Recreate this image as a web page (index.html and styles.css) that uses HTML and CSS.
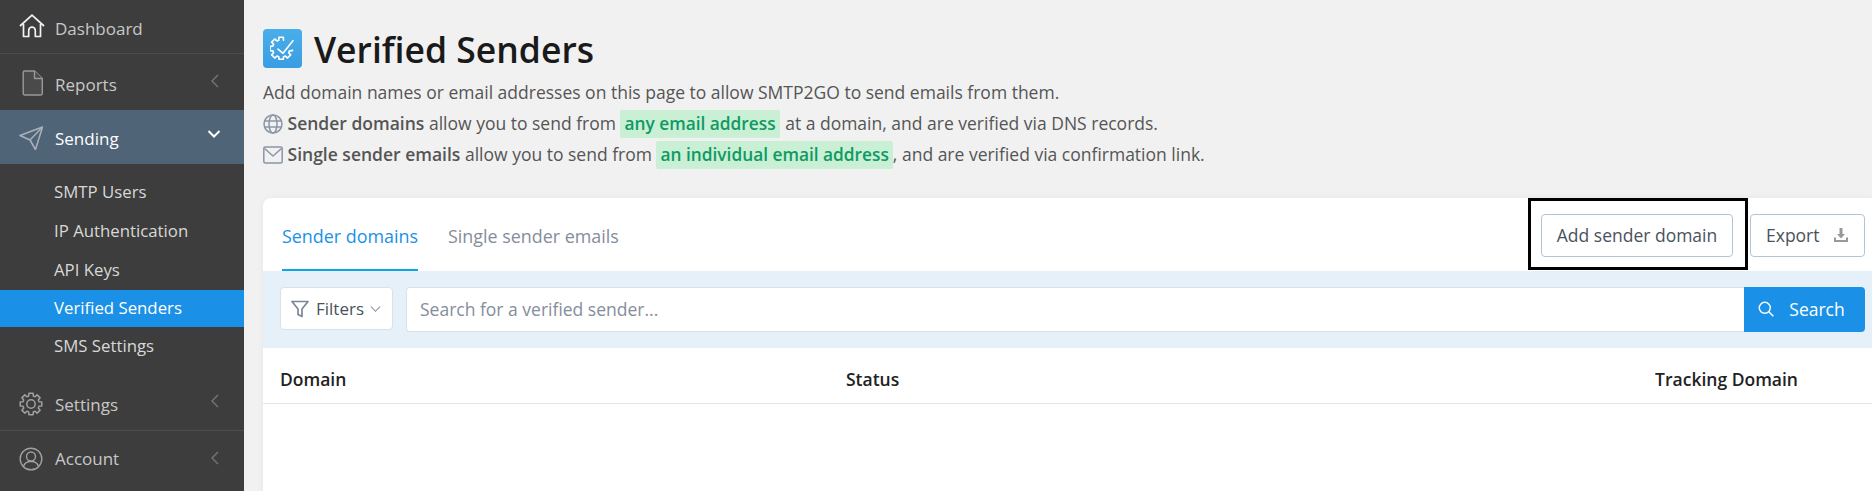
FILE: index.html
```html
<!DOCTYPE html>
<html lang="en">
<head>
    <meta charset="UTF-8">
    <title>Verified Senders</title>
    <link rel="stylesheet" href="styles.css">
</head>
<body>
    <div class="layout">
        <nav class="sidebar">
            <a class="nav-item nav-dashboard">
                <svg class="nav-icon" viewBox="0 0 26 24" fill="none" stroke="#f2f2f2" stroke-width="1.7" stroke-linejoin="round"><path d="M1 12 13 1.2 25 12"/><path d="M4.5 10v12.500h5.200v-6a3.300 3.300 0 0 1 6.600 0v6h5.200V10"/></svg>
                <span>Dashboard</span>
            </a>
            <a class="nav-item nav-reports">
                <svg class="nav-icon" viewBox="0 0 24 26" fill="#4a4a4a" stroke="#999" stroke-width="1.4" stroke-linejoin="round"><path d="M5.700 1h9.800l7.800 7.500v15a1.500 1.500 0 0 1-1.500 1.500H5.700a1.500 1.500 0 0 1-1.500-1.500v-21A1.500 1.500 0 0 1 5.700 1Z"/><path d="M15.500 1v7.500h7.800"/></svg>
                <span>Reports</span>
                <svg class="caret" viewBox="0 0 8 14" fill="none" stroke="#777" stroke-width="1.3"><path d="M7 1 1 7l6 6"/></svg>
            </a>
            <a class="nav-item nav-sending">
                <svg class="nav-icon" viewBox="0 0 24 24" fill="none" stroke="#a9b2bc" stroke-width="1.5" stroke-linejoin="round"><path d="M23.500 1 1 9.500 11 14l5.500 9.500Z"/><path d="M23.500 1 11 14"/></svg>
                <span>Sending</span>
                <svg class="caret-open" viewBox="0 0 14 8" fill="none" stroke="#fff" stroke-width="2"><path d="m1.500 1 5.500 5.500L12.500 1"/></svg>
            </a>
            <div class="submenu">
                <a class="sub-item">SMTP Users</a>
                <a class="sub-item">IP Authentication</a>
                <a class="sub-item">API Keys</a>
                <a class="sub-item active">Verified Senders</a>
                <a class="sub-item">SMS Settings</a>
            </div>
            <a class="nav-item nav-settings">
                <svg class="nav-icon" viewBox="0 0 24 24" fill="none" stroke="#a0a0a0" stroke-width="1.500" stroke-linejoin="round"><circle cx="12" cy="12" r="4.200"/><path d="M22.800 9.900v4.200l-2.820.19-.72 1.730 1.860 2.130-2.970 2.970-2.130-1.860-1.730.72-.19 2.820H9.900l-.19-2.820-1.730-.72-2.130 1.860-2.970-2.970 1.860-2.130-.72-1.730-2.820-.19V9.900l2.820-.19.72-1.730-1.860-2.130 2.970-2.970 2.130 1.860 1.730-.72.19-2.820h4.200l.19 2.820 1.730.72 2.130-1.860 2.970 2.970-1.860 2.130.72 1.730Z"/></svg>
                <span>Settings</span>
                <svg class="caret" viewBox="0 0 8 14" fill="none" stroke="#777" stroke-width="1.3"><path d="M7 1 1 7l6 6"/></svg>
            </a>
            <a class="nav-item nav-account">
                <svg class="nav-icon" viewBox="0 0 24 24" fill="none" stroke="#a0a0a0" stroke-width="1.400"><circle cx="12" cy="12" r="10.800"/><circle cx="12" cy="9.500" r="4.500"/><path d="M4.500 19.500c1-3.500 3.500-5 7.500-5s6.500 1.500 7.500 5"/></svg>
                <span>Account</span>
                <svg class="caret" viewBox="0 0 8 14" fill="none" stroke="#777" stroke-width="1.3"><path d="M7 1 1 7l6 6"/></svg>
            </a>
        </nav>

        <main class="content">
            <header class="page-head">
                <h1 class="page-title">
                    <span class="title-badge">
                        <svg viewBox="0 0 24 24" fill="none" stroke="#fff" stroke-width="1.600" stroke-linejoin="round" stroke-linecap="round"><path d="M21.500 13.600v.5l-2.820.19-.72 1.730 1.860 2.130-2.970 2.970-2.130-1.860-1.730.72-.19 2.320H8.600l-.19-2.320-1.730-.72-2.130 1.860-2.970-2.970 1.860-2.130-.72-1.730L0 14.100V9.900l2.720-.19.72-1.730-1.860-2.130 2.970-2.970 2.130 1.860 1.730-.72.19-2.820h4.200l.19 2.820"/><path d="m7.700 12.500 4.800 4.100L22 4.500"/></svg>
                    </span>
                    Verified Senders
                </h1>
                <p class="intro">Add domain names or email addresses on this page to allow SMTP2GO to send emails from them.</p>
                <p class="intro">
                    <svg class="intro-icon" viewBox="0 0 20 20" fill="none" stroke="#8b95a8" stroke-width="1.500"><circle cx="10" cy="10" r="9"/><ellipse cx="10" cy="10" rx="4" ry="9"/><path d="M1.500 7h17M1.500 13h17"/></svg>
                    <b>Sender domains</b> allow you to send from <mark class="hl">any email address</mark> at a domain, and are verified via DNS records.
                </p>
                <p class="intro">
                    <svg class="intro-icon" viewBox="0 0 20 18" fill="none" stroke="#8b95a8" stroke-width="1.500" stroke-linejoin="round"><rect x=".8" y="1" width="18.400" height="16" rx="1.500"/><path d="m1.500 2.500 8.500 7.500 8.500-7.500"/></svg>
                    <b>Single sender emails</b> allow you to send from <mark class="hl hl-tight">an individual email address</mark>, and are verified via confirmation link.
                </p>
            </header>

            <section class="card">
                <div class="card-top">
                    <div class="tabs">
                        <a class="tab active">Sender domains</a>
                        <a class="tab">Single sender emails</a>
                    </div>
                    <div class="actions">
                        <button class="btn btn-add">Add sender domain</button>
                        <button class="btn btn-export">Export
                            <svg viewBox="0 0 16 16" fill="#999"><path d="M6.500 1h3v6H12L8 11.500 4 7h2.500Z"/><path d="M1 10.500h2V13h10v-2.500h2V15H1Z"/></svg>
                        </button>
                        <div class="callout"></div>
                    </div>
                </div>

                <div class="search-band">
                    <button class="filter-btn">
                        <svg viewBox="0 0 18 18" fill="none" stroke="#7c8797" stroke-width="1.700" stroke-linejoin="round"><path d="M1 1.500h16l-6 7.500v7.500l-4-2V9Z"/></svg>
                        Filters
                        <svg class="filter-caret" viewBox="0 0 12 8" fill="none" stroke="#8a94a3" stroke-width="1.200"><path d="m1 1.500 5 5 5-5"/></svg>
                    </button>
                    <div class="search-box">
                        <input class="search-input" type="text" placeholder="Search for a verified sender...">
                        <button class="search-btn">
                            <svg viewBox="0 0 16 16" fill="none" stroke="#fff" stroke-width="1.400"><circle cx="6.800" cy="6.800" r="5.500"/><path d="m10.800 10.800 4.500 4.500"/></svg>
                            Search
                        </button>
                    </div>
                </div>

                <div class="table-head">
                    <div class="col-domain">Domain</div>
                    <div class="col-status">Status</div>
                    <div class="col-tracking">Tracking Domain</div>
                </div>
            </section>
        </main>
    </div>
</body>
</html>
```

FILE: styles.css
```css
* {
    box-sizing: border-box;
}

html, body {
    height: 100%;
}

body {
    margin: 0;
    overflow: hidden;
    background-color: #f1f1f1;
    font-family: "Open Sans", sans-serif;
    font-size: 17.5px;
    color: #555;
}

.layout {
    display: flex;
    height: 491px;
    overflow: hidden;
}

/* sidebar */
.sidebar {
    flex: 0 0 244px;
    background-color: #3d3d3d;
    display: flex;
    flex-direction: column;
    font-size: 17px;
}

.nav-item {
    display: flex;
    align-items: center;
    padding-left: 19px;
    color: #c8c8c8;
    position: relative;
}

.nav-item span {
    margin-left: 12px;
}

.nav-icon {
    width: 24px;
    height: 24px;
    flex: none;
}

.nav-dashboard {
    height: 54px;
    border-bottom: 1px solid #4c4c4c;
    padding-top: 4px;
}

.nav-dashboard .nav-icon {
    width: 26px;
    margin-top: -5px;
}

.nav-dashboard span {
    margin-left: 10px;
}

.nav-reports {
    height: 56px;
    padding-top: 4px;
}

.nav-reports .nav-icon {
    height: 26px;
    margin-top: -3px;
}

.nav-sending {
    height: 54px;
    padding-top: 2px;
    background-color: #506478;
    color: #fff;
}

.nav-settings {
    height: 57px;
    padding-top: 4px;
    border-bottom: 1px solid #4c4c4c;
}

.nav-account {
    height: 57px;
    margin-top: -1px;
}

.caret {
    position: absolute;
    right: 25px;
    top: 50%;
    margin-top: -8px;
    width: 8px;
    height: 14px;
}

.caret-open {
    position: absolute;
    right: 23px;
    top: 20px;
    width: 14px;
    height: 8px;
}

.submenu {
    padding-top: 9px;
    height: 210px;
    font-size: 16.800px;
}

.sub-item {
    display: flex;
    align-items: center;
    height: 39px;
    padding-bottom: 2px;
    padding-left: 54px;
    color: #d8d8d8;
}

.sub-item.active {
    height: 37px;
    background-color: #1a91e6;
    color: #fff;
}

/* main column */
.content {
    flex: 1;
    min-width: 0;
    padding: 29px 0 0 19px;
}

.page-title {
    display: flex;
    align-items: center;
    gap: 12px;
    margin: 0 0 9px;
    height: 39px;
    font-size: 35.500px;
    font-weight: 600;
    color: #1a1a1a;
}

.title-badge {
    flex: none;
    width: 39px;
    height: 39px;
    border-radius: 4px;
    background: linear-gradient(#4aaeea, #3a9de2);
    display: flex;
    align-items: center;
    justify-content: center;
}

.title-badge svg {
    width: 25px;
    height: 25px;
    margin-top: -1px;
}

.intro {
    margin: 0;
    height: 31px;
    line-height: 31px;
    white-space: nowrap;
}

.intro b {
    font-weight: 600;
}

.intro-icon {
    width: 20px;
    height: 20px;
    vertical-align: -4px;
}

.hl {
    display: inline-block;
    height: 28px;
    line-height: 28px;
    padding: 0 4px;
    margin: 0 1px 0 0;
    border-radius: 2px;
    background-color: #c9efd5;
    color: #0e9a63;
    font-size: 17.300px;
    font-weight: 600;
}

.hl-tight {
    margin-right: 0;
}

/* card */
.card {
    margin-top: 28px;
    background-color: #fff;
    border-radius: 8px 0 0 0;
    height: 320px;
    box-shadow: 0 0 6px rgba(0, 0, 0, 0.05);
}

.card-top {
    display: flex;
    justify-content: space-between;
    height: 73px;
    padding: 0 7px 0 19px;
}

.tabs {
    display: flex;
    gap: 30px;
    font-size: 17.900px;
}

.tab {
    height: 73px;
    padding-top: 26px;
    color: #848d9c;
}

.tab.active {
    color: #1a91e6;
    border-bottom: 2px solid #0ea5ec;
}

.actions {
    display: flex;
    gap: 17px;
    padding-top: 16px;
    position: relative;
}

.btn {
    height: 43px;
    border: 1px solid #b4c4d4;
    border-radius: 4px;
    background-color: #fff;
    font-family: inherit;
    font-size: 17.500px;
    color: #49525c;
    white-space: nowrap;
}

.btn-add {
    width: 192px;
    padding: 0 0 2px;
}

.btn-export {
    width: 115px;
    padding: 0 15px 2px;
    display: flex;
    align-items: center;
    justify-content: space-between;
}

.btn-export svg {
    width: 16px;
    height: 16px;
}

/* black box drawn over the screenshot */
.callout {
    position: absolute;
    left: -13px;
    top: 0;
    width: 220px;
    height: 72px;
    border: 3px solid #000;
}

.search-band {
    display: flex;
    gap: 13px;
    height: 77px;
    padding: 16px 7px 0 17px;
    background-color: #e6f0f9;
}

.filter-btn {
    flex: none;
    display: flex;
    align-items: center;
    width: 113px;
    height: 43px;
    padding: 0 0 0 10px;
    border: 1px solid #d8e2ec;
    border-radius: 4px;
    background-color: #fff;
    font-family: inherit;
    font-size: 17px;
    color: #49525c;
}

.filter-btn svg {
    width: 18px;
    height: 18px;
    margin-right: 7px;
}

.filter-btn .filter-caret {
    width: 11px;
    height: 8px;
    margin: 0 0 0 6px;
}

.search-box {
    flex: 1;
    display: flex;
    height: 45px;
}

.search-input {
    flex: 1;
    min-width: 0;
    border: 1px solid #d8e2ec;
    border-right: 0;
    border-radius: 4px 0 0 4px;
    padding: 0 13px 2px;
    font-family: inherit;
    font-size: 17.500px;
    outline: none;
}

.search-input::placeholder {
    color: #848d9c;
    opacity: 1;
}

.search-btn {
    flex: none;
    width: 121px;
    display: flex;
    align-items: center;
    justify-content: center;
    gap: 15px;
    border: 0;
    border-radius: 0 4px 4px 0;
    padding: 0 6px 2px 0;
    background-color: #1a91e6;
    color: #fff;
    font-family: inherit;
    font-size: 17.500px;
}

.search-btn svg {
    width: 16px;
    height: 16px;
}

.table-head {
    display: flex;
    align-items: center;
    height: 56px;
    padding: 6px 74px 0 17px;
    border-bottom: 1px solid #e2e6ea;
    font-weight: 600;
    color: #222;
}

.col-domain {
    width: 566px;
}

.col-status {
    flex: 1;
}
```
